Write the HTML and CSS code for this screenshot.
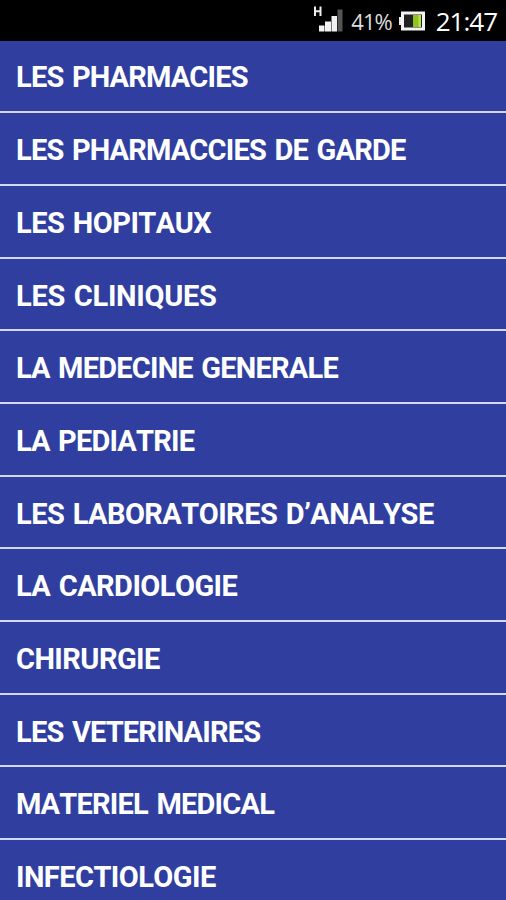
FILE: index.html
```
<!DOCTYPE html>
<html lang="fr">
<head>
    <meta charset="UTF-8">
    <meta name="viewport" content="width=device-width, initial-scale=1.0">
    <title>Annuaire santé</title>
    <link rel="stylesheet" href="styles.css">
</head>
<body>
    <header class="status-bar">
        <svg class="signal" width="30" height="28" viewBox="0 0 30 28">
            <path d="M2 .5v9.500M7.500 .5v9.500M2 5.200h5.500" fill="none" stroke="#eee" stroke-width="2"/>
            <path d="M6 19.500h5.500v6H6zM12 15.500h6v10h-6zM18.500 10h5.500v15.500h-5.500z" fill="#f2f2f2"/>
            <path d="M24.500 3.500h5v22h-5z" fill="#555"/>
        </svg>
        <span class="percent">41%</span>
        <svg class="battery" width="27" height="20" viewBox="0 0 27 20">
            <path d="M0 6h3v8H0z" fill="#eee"/>
            <rect x="3.500" y="2" width="21" height="16" fill="#222" stroke="#f4f4f4" stroke-width="3"/>
            <path d="M14 4h8v12h-8z" fill="#8fc31f"/>
            <path d="M19.500 4h2.500v12h-2.500z" fill="#b9e34a"/>
        </svg>
        <span class="clock">21:47</span>
    </header>

    <ul class="menu">
        <li><span class="tight">LES PHARMACIES</span></li>
        <li><span class="tight">LES PHARMACCIES DE GARDE</span></li>
        <li><span>LES HOPITAUX</span></li>
        <li><span class="loose">LES CLINIQUES</span></li>
        <li><span class="tight">LA MEDECINE GENERALE</span></li>
        <li><span class="tight">LA PEDIATRIE</span></li>
        <li><span>LES LABORATOIRES D’ANALYSE</span></li>
        <li><span>LA CARDIOLOGIE</span></li>
        <li><span>CHIRURGIE</span></li>
        <li><span class="tight">LES VETERINAIRES</span></li>
        <li><span class="tight">MATERIEL MEDICAL</span></li>
        <li><span>INFECTIOLOGIE</span></li>
    </ul>
</body>
</html>
```
FILE: styles.css
```
* {
    box-sizing: border-box;
}
body {
    font-family: Roboto, "Liberation Sans", sans-serif;
    background-color: #303f9f;
    color: #fff;
    margin: 0;
    height: 900px;
    overflow: hidden;
}
.status-bar {
    display: flex;
    justify-content: flex-end;
    align-items: flex-start;
    height: 40.6px;
    padding: 6px 9px 0 0;
    background-color: #000;
}
.percent {
    margin-left: 8px;
    color: #ddd;
    font: 22px/30px "Open Sans", sans-serif;
    letter-spacing: -1px;
}
.battery {
    margin: 5px 10px 0 7px;
}
.clock {
    font: 26px/30px "Open Sans", sans-serif;
    letter-spacing: -1px;
}
.menu {
    list-style: none;
    margin: 0;
    padding: 0;
}
.menu li {
    display: flex;
    align-items: center;
    height: 72.7px;
    padding: 3px 16px 0;
    border-bottom: 2px solid #d3d7f0;
}
.menu span {
    font-size: 29px;
    font-weight: bold;
    font-kerning: none;
    letter-spacing: -0.55px;
    word-spacing: 2px;
    white-space: nowrap;
}
.menu .tight {
    letter-spacing: -0.78px;
}
.menu .loose {
    letter-spacing: -0.3px;
}
```
